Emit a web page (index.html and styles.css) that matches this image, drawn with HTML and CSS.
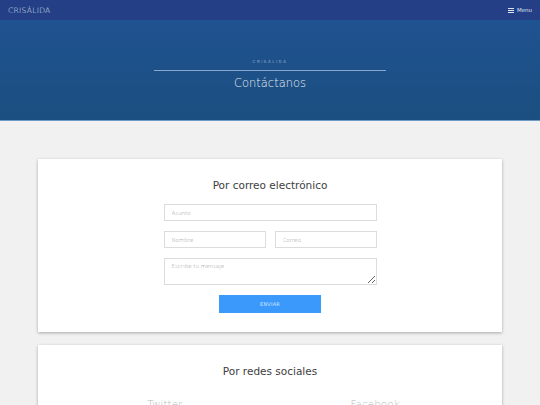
FILE: index.html
```html
<!DOCTYPE html>
<html lang="es">
<head>
<meta charset="utf-8">
<title>Contáctanos - Crisálida</title>
<link rel="stylesheet" href="styles.css">
</head>
<body>
<nav class="navbar">
  <span class="brand">CRISÁLIDA</span>
  <span class="menu"><span class="bars"></span>Menu</span>
</nav>
<header class="hero">
  <div class="hero-inner">
    <div class="kicker">CRISÁLIDA</div>
    <h1 class="hero-title">Contáctanos</h1>
  </div>
</header>
<main class="content">
  <section class="card">
    <h2 class="card-title">Por correo electrónico</h2>
    <form class="form">
      <input class="field" type="text" placeholder="Asunto">
      <div class="row">
        <input class="field" type="text" placeholder="Nombre">
        <input class="field" type="text" placeholder="Correo">
      </div>
      <textarea class="field area" placeholder="Escribe tu mensaje"></textarea>
      <button class="btn" type="button">ENVIAR</button>
    </form>
  </section>
  <section class="card card2">
    <h2 class="card-title">Por redes sociales</h2>
    <div class="socials">
      <span class="social">Twitter</span>
      <span class="social">Facebook</span>
    </div>
  </section>
</main>
</body>
</html>
```
FILE: styles.css
```css
* { box-sizing: border-box; }
html, body { margin: 0; padding: 0; }
body {
  font-family: "DejaVu Sans", "Open Sans", sans-serif;
  background: #f1f1f1;
  color: #333;
}
.navbar {
  height: 20px;
  background: #243f86;
  display: flex;
  align-items: center;
  justify-content: space-between;
  padding: 0 8px;
}
.brand {
  color: #dfe4f0;
  font-size: 7.5px;
  font-weight: 300;
  letter-spacing: 0.3px;
}
.menu {
  color: #dfe4f0;
  font-size: 5.5px;
  display: flex;
  align-items: center;
  gap: 3px;
}
.bars {
  width: 6px;
  height: 5px;
  border-top: 1px solid #dfe4f0;
  border-bottom: 1px solid #dfe4f0;
  position: relative;
}
.bars::after {
  content: "";
  position: absolute;
  left: 0; right: 0; top: 1px;
  border-top: 1px solid #dfe4f0;
}
.hero {
  height: 101px;
  background: linear-gradient(#1f5290, #1b4f80);
  border-bottom: 1px solid #6f9ac5;
  display: flex;
  justify-content: center;
  padding-top: 39px;
}
.hero-inner {
  width: 232px;
  text-align: center;
}
.kicker {
  font-size: 4px;
  letter-spacing: 1.5px;
  color: #8fa9cc;
  padding-bottom: 6px;
  border-bottom: 1px solid #8aa7cf;
}
.hero-title {
  margin: 5px 0 0;
  font-weight: 300;
  font-size: 11.5px;
  color: #e6ecf5;
}
.content {
  padding: 38px 38px 0;
  display: flex;
  flex-direction: column;
  gap: 13px;
}
.card {
  background: #fff;
  box-shadow: 0 1px 3px rgba(0,0,0,0.3);
  padding: 20px 0 19px;
}
.card2 { padding-bottom: 0; height: 80px; }
.card-title {
  margin: 0;
  text-align: center;
  font-weight: 400;
  font-size: 10.5px;
  color: #3d3d3d;
}
.form {
  width: 213px;
  margin: 13px auto 0;
  display: flex;
  flex-direction: column;
  gap: 10px;
}
.row {
  display: flex;
  gap: 9px;
}
.field {
  display: block;
  width: 100%;
  height: 17px;
  border: 1px solid #dcdcdc;
  border-radius: 0;
  padding: 0 7px;
  font-family: inherit;
  font-weight: 300;
  font-size: 5.5px;
  color: #444;
  background: #fff;
  outline: none;
}
.field::placeholder { color: #999; }
.area {
  height: 27px;
  padding-top: 4px;
  resize: vertical;
}
.btn {
  align-self: center;
  width: 102px;
  height: 18px;
  margin-top: 0;
  border: none;
  background: #3b99fc;
  color: #cfe5ff;
  font-family: inherit;
  font-size: 5px;
  letter-spacing: 0.2px;
}
.socials {
  display: flex;
  justify-content: center;
  gap: 168px;
  padding-left: 7px;
  margin-top: 21px;
}
.social {
  font-size: 10.5px;
  color: #bbb;
  font-weight: 300;
}
```
